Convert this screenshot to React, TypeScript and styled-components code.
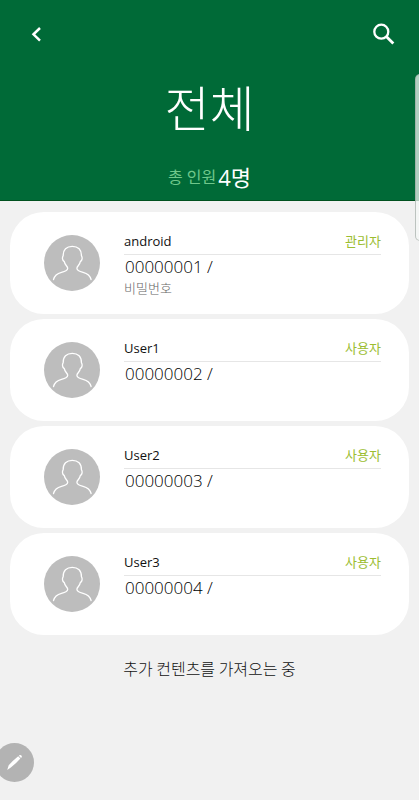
import React from "react";
import styled, { createGlobalStyle } from "styled-components";

const GlobalStyle = createGlobalStyle`
  * { box-sizing: border-box; }
  body {
    margin: 0;
    background: #f1f1f1;
    color: #111;
    font-family: "Open Sans", "Noto Sans CJK KR", sans-serif;
  }
  h1, h2, p, ul { margin: 0; padding: 0; }
  button { border: 0; padding: 0; background: none; color: inherit; font: inherit; cursor: pointer; }
`;

const Page = styled.div`
  min-height: 100vh;
  overflow-x: hidden;
`;

const Header = styled.header`
  display: flex;
  flex-direction: column;
  align-items: center;
  padding-bottom: 10px;
  border-bottom: 1px solid #00501f;
  background: #006a37;
  color: #fff;
`;

const Toolbar = styled.div`
  display: flex;
  align-items: center;
  justify-content: space-between;
  width: 100%;
  padding: 14px 16px 0;
`;

const IconButton = styled.button`
  display: grid;
  place-items: center;
  width: 40px;
  height: 40px;
`;

const Title = styled.h1`
  margin-top: 16px;
  font-size: 49px;
  line-height: 72px;
  font-weight: 300;
  font-family: "Noto Sans CJK KR", sans-serif;
`;

const Summary = styled.p`
  display: flex;
  align-items: flex-start;
  gap: 2px;
  margin-top: 22px;
`;

const SummaryLabel = styled.span`
  color: #6fc78b;
  font-size: 16px;
  line-height: 26px;
`;

const SummaryCount = styled.span`
  font-size: 22px;
  line-height: 26px;
`;

const UserList = styled.ul`
  display: flex;
  flex-direction: column;
  gap: 5px;
  padding: 11px 10px 0;
  list-style: none;
`;

const Card = styled.li`
  display: flex;
  gap: 24px;
  min-height: 102px;
  padding: 18px 28px 14px 34px;
  border-radius: 34px;
  background: #fff;
`;

const Avatar = styled.div`
  flex: none;
  width: 56px;
  height: 56px;
  margin-top: 5px;
  border-radius: 50%;
  background: #bdbdbd;
`;

const Details = styled.div`
  flex: 1;
  min-width: 0;
`;

const NameRow = styled.div`
  display: flex;
  align-items: flex-start;
  justify-content: space-between;
  height: 25px;
  border-bottom: 1px solid #e6e6e6;
`;

const UserName = styled.h2`
  font-size: 13px;
  line-height: 22px;
  font-weight: 400;
`;

const Role = styled.span`
  color: #9bbd30;
  font-size: 13px;
  line-height: 22px;
`;

const UserId = styled.p`
  padding-left: 1px;
  color: #000;
  font-size: 17px;
  line-height: 24px;
  font-weight: 300;
`;

const Credential = styled.p`
  color: #666;
  font-size: 13px;
  line-height: 18px;
  font-weight: 300;
`;

const Loading = styled.p`
  margin-top: 21px;
  font-family: "Noto Sans CJK KR", sans-serif;
  font-size: 16px;
  line-height: 24px;
  font-weight: 300;
  text-align: center;
`;

const EdgeHandle = styled.div`
  position: fixed;
  top: 74px;
  right: -8px;
  width: 12px;
  height: 167px;
  border: 1px solid rgba(150, 160, 155, 0.6);
  border-radius: 5px;
  background: rgba(245, 248, 246, 0.72);
`;

const EditButton = styled.button`
  position: fixed;
  left: -5px;
  bottom: 18px;
  display: grid;
  place-items: center;
  width: 39px;
  height: 39px;
  border-radius: 50%;
  background: #b3b3b3;
`;

type User = { name: string; id: string; role: string; credential?: string };

const users: User[] = [
  { name: "android", id: "00000001", role: "관리자", credential: "비밀번호" },
  { name: "User1", id: "00000002", role: "사용자" },
  { name: "User2", id: "00000003", role: "사용자" },
  { name: "User3", id: "00000004", role: "사용자" },
];

const BackIcon = () => (
  <svg width="40" height="40" viewBox="0 0 40 40" fill="none" stroke="#fff" strokeWidth="2.5" aria-hidden="true">
    <path d="M24 14 17.500 20.300 24 26.600" />
  </svg>
);

const SearchIcon = () => (
  <svg width="40" height="40" viewBox="0 0 40 40" fill="none" stroke="#fff" aria-hidden="true">
    <circle cx="18.300" cy="17.700" r="7" strokeWidth="2.3" />
    <path d="m23.300 22.500 7 7" strokeWidth="2.800" />
  </svg>
);

const PersonIcon = () => (
  <svg width="56" height="56" viewBox="0 0 56 56" fill="none" stroke="#fff" strokeWidth="1.3" strokeLinecap="round" strokeLinejoin="round" aria-hidden="true">
    <path d="M9.500 44.500C10.500 40.500 13.500 38.500 17.500 37.400C21.500 36.400 23.700 35.600 23.700 33.300C23.700 31.200 20.800 30.200 20.300 26.600C18.200 25.300 18 22.500 19.200 20.600C19 14.800 22.500 11.300 28.300 11.300S37.600 14.800 37.400 20.600C38.600 22.500 38.400 25.300 36.300 26.600C35.800 30.200 32.900 31.200 32.900 33.300C32.900 35.600 35.100 36.400 39.100 37.400C43.100 38.500 46.100 40.500 47.100 44.500" />
  </svg>
);

const PencilIcon = () => (
  <svg width="39" height="39" viewBox="0 0 39 39" fill="#fff" aria-hidden="true">
    <path d="M12.200 27 13.700 22.300Q18 17.500 23.200 13.300L25.400 15.500Q21 20.500 15.800 24.600ZM23.900 12.700l.8-.6q.9-.4 1.700.4t.3 1.700l-.7.800z" />
  </svg>
);

export default function App() {
  return (
    <Page>
      <GlobalStyle />
      <Header>
        <Toolbar>
          <IconButton type="button" aria-label="뒤로"><BackIcon /></IconButton>
          <IconButton type="button" aria-label="검색"><SearchIcon /></IconButton>
        </Toolbar>
        <Title>전체</Title>
        <Summary>
          <SummaryLabel>총 인원</SummaryLabel>
          <SummaryCount>4명</SummaryCount>
        </Summary>
      </Header>
      <main>
        <UserList>
          {users.map((user) => (
            <Card key={user.id}>
              <Avatar><PersonIcon /></Avatar>
              <Details>
                <NameRow>
                  <UserName>{user.name}</UserName>
                  <Role>{user.role}</Role>
                </NameRow>
                <UserId>{user.id} /</UserId>
                {user.credential && <Credential>{user.credential}</Credential>}
              </Details>
            </Card>
          ))}
        </UserList>
        <Loading role="status">추가 컨텐츠를 가져오는 중</Loading>
      </main>
      <EdgeHandle />
      <EditButton type="button" aria-label="편집"><PencilIcon /></EditButton>
    </Page>
  );
}
